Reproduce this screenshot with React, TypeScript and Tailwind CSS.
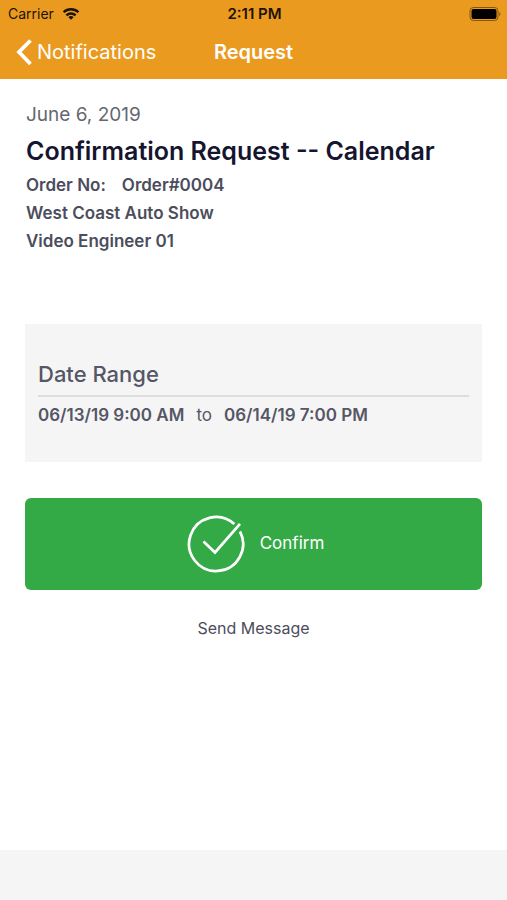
export default function App() {
  return (
    <div className="flex min-h-screen flex-col bg-white font-['Inter','Liberation_Sans',sans-serif] text-[#4c4d5c]">
      <header className="bg-[#eb9a20] pb-[11px] text-white">
        <div className="grid h-7 grid-cols-3 items-center pl-2 pr-1.5 text-[#1c1305]">
          <div className="flex items-center gap-2 text-sm">
            <span>Carrier</span>
            <svg viewBox="0 0 18 13" className="h-3 w-[18px]" fill="none" stroke="currentColor" strokeWidth="2.6" aria-hidden="true">
              <path d="M1 4.6a11.5 11.5 0 0 1 16 0M4 8a7.2 7.2 0 0 1 10 0" />
              <path d="M9 12.8 6.200 10a3.800 3.800 0 0 1 5.600 0z" fill="currentColor" stroke="none" />
            </svg>
          </div>
          <span className="text-center text-[15px] font-semibold">2:11 PM</span>
          <svg viewBox="0 0 32 14" className="h-[14px] w-8 justify-self-end" role="img" aria-label="Battery full">
            <rect x="1" y="0.5" width="28" height="13" rx="3.5" fill="none" stroke="currentColor" opacity="0.5" />
            <rect x="2.5" y="2" width="25" height="10" rx="2" fill="#000000" />
            <path d="M30.300 5c1.600.7 1.600 3.300 0 4z" fill="currentColor" opacity="0.5" />
          </svg>
        </div>
        <div className="grid h-10 grid-cols-[1fr_auto_1fr] items-center pt-2">
          <button type="button" className="flex items-center gap-[5px] pl-4 text-xl">
            <svg viewBox="0 0 16 28" className="h-7 w-4" fill="none" stroke="currentColor" strokeWidth="3.800" aria-hidden="true">
              <path d="M14.500 2.500 3 14l11.500 12" />
            </svg>
            Notifications
          </button>
          <h1 className="text-xl font-semibold">Request</h1>
        </div>
      </header>
      <main className="flex-1 px-[25px] pt-6">
        <div className="pl-px">
          <p className="text-[19px] leading-6 text-[#66676f]">June 6, 2019</p>
          <h2 className="pt-1 text-[25px] font-semibold leading-10 text-[#15152f]">Confirmation Request -- Calendar</h2>
          <div className="text-[17px] font-semibold leading-7">
            <p className="flex gap-4"><span>Order No:</span><span>Order#0004</span></p>
            <p>West Coast Auto Show</p>
            <p>Video Engineer 01</p>
          </div>
        </div>
        <section className="mt-[69px] bg-[#f5f5f5] px-[13px] pb-[33px] pt-8 text-[#555666]">
          <h3 className="border-b-2 border-[#dddddd] pb-[3px] text-[22px] font-medium leading-9">Date Range</h3>
          <p className="flex gap-3 pt-1 text-[17px] font-semibold leading-7"><span>06/13/19 9:00 AM</span><span className="font-normal">to</span><span>06/14/19 7:00 PM</span></p>
        </section>
        <button type="button" className="mt-9 flex h-[92px] w-full items-center justify-center gap-[15px] rounded-md bg-[#34aa47] pl-1 text-[17px] text-white">
          <svg viewBox="0 0 58 58" className="size-[58px]" fill="none" stroke="currentColor" strokeWidth="2.700" aria-hidden="true">
            <path d="M53 16.500A27 27 0 1 1 47.300 9.100M16.500 26.500 28 37.500 53 8.800" />
          </svg>
          Confirm
        </button>
        <button type="button" className="mt-6 block w-full text-center text-base leading-7">Send Message</button>
      </main>
      <footer className="h-[50px] bg-[#f5f5f5]" />
    </div>
  );
}
